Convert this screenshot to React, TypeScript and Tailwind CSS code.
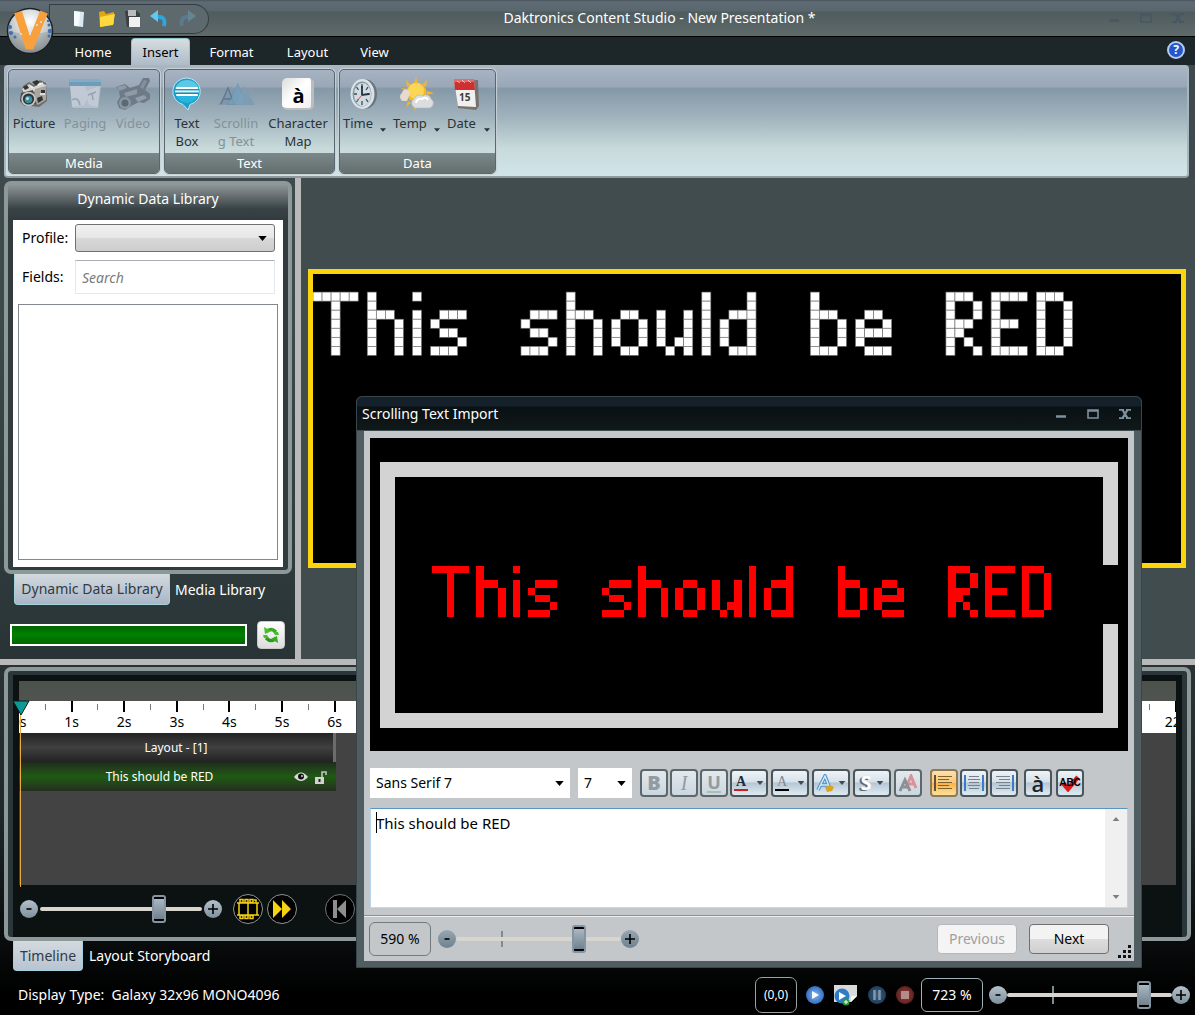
import React from 'react';

const GLYPHS: Record<string, string[]> = {
  T: ['XXXXX', '..X..', '..X..', '..X..', '..X..', '..X..', '..X..'],
  h: ['X...', 'X...', 'XXX.', 'X..X', 'X..X', 'X..X', 'X..X'],
  i: ['X', '.', 'X', 'X', 'X', 'X', 'X'],
  s: ['....', '....', '.XXX', 'X...', '.XX.', '...X', 'XXX.'],
  o: ['....', '....', '.XX.', 'X..X', 'X..X', 'X..X', '.XX.'],
  u: ['....', '....', 'X..X', 'X..X', 'X..X', 'X.XX', '.X.X'],
  l: ['X', 'X', 'X', 'X', 'X', 'X', 'X'],
  d: ['...X', '...X', '.XXX', 'X..X', 'X..X', 'X..X', '.XXX'],
  b: ['X...', 'X...', 'XXX.', 'X..X', 'X..X', 'X..X', 'XXX.'],
  e: ['....', '....', '.XX.', 'X..X', 'XXXX', 'X...', '.XXX'],
  R: ['XXX.', 'X..X', 'X..X', 'XXX.', 'XX..', 'X.X.', 'X..X'],
  E: ['XXXX', 'X...', 'X...', 'XXX.', 'X...', 'X...', 'XXXX'],
  D: ['XXX.', 'X..X', 'X..X', 'X..X', 'X..X', 'X..X', 'XXX.'],
  ' ': ['.....'],
};

/* 96x32 LED matrix that lights the cells of a message. */
function LedMatrix({ message, col, row, color, grid }: { message: string; col: number; row: number; color: string; grid?: string }) {
  const lamps: React.ReactElement[] = [];
  let x = col;
  for (const ch of message) {
    const rows = GLYPHS[ch];
    rows.forEach((line, r) =>
      [...line].forEach((c, k) => {
        if (c === 'X') {
          lamps.push(
            <rect key={`${x + k}-${r}`} x={x + k} y={row + r} width={1} height={1} fill={color} stroke={grid ?? 'none'} strokeWidth={0.07} />,
          );
        }
      }),
    );
    x += rows[0].length + (ch === ' ' ? 0 : 1);
  }
  return (
    <svg role="img" aria-label={message} viewBox="0 0 96 32" shapeRendering={grid ? 'auto' : 'crispEdges'} className="block w-full">
      {lamps}
    </svg>
  );
}

const SLIDER =
  "h-7 min-w-0 appearance-none bg-transparent [&::-webkit-slider-runnable-track]:h-1 [&::-webkit-slider-runnable-track]:rounded-full [&::-webkit-slider-runnable-track]:bg-[#d8d4ce] [&::-webkit-slider-thumb]:-mt-3 [&::-webkit-slider-thumb]:h-7 [&::-webkit-slider-thumb]:w-3.5 [&::-webkit-slider-thumb]:appearance-none [&::-webkit-slider-thumb]:rounded-[3px] [&::-webkit-slider-thumb]:border-2 [&::-webkit-slider-thumb]:border-[#8495a1] [&::-webkit-slider-thumb]:bg-[linear-gradient(180deg,#000_0_2px,#a9b8c2_2px,#71818e_22px,#000_22px)]";

function RoundStep({ label, dark }: { label: string; dark?: boolean }) {
  return (
    <button
      aria-label={label === '+' ? 'Zoom in' : 'Zoom out'}
      className={
        'flex size-[18px] shrink-0 items-center justify-center rounded-full text-black ' +
        (dark ? 'bg-linear-to-b from-[#97a6b2] to-[#6f818f]' : 'bg-linear-to-b from-[#b4c1ca] to-[#7e909d]')
      }
    >
      <svg viewBox="0 0 12 12" className="size-3" stroke="currentColor" strokeWidth="1.6">
        {label === '+' ? <path d="M1 6h10M6 1v10" /> : <path d="M3.5 6h5" />}
      </svg>
    </button>
  );
}

function Caret({ className }: { className?: string }) {
  return (
    <svg viewBox="0 0 10 6" className={className ?? 'h-[5px] w-[9px]'} fill="currentColor">
      <path d="M0 0h10L5 6z" />
    </svg>
  );
}

/* ---------- ribbon icons ---------- */

const CameraIcon = () => (
  <svg viewBox="0 0 32 32" className="size-8">
    <path d="M5 8l6-4 5 3 6-5 6 3 1 18-8 6-16-2-3-5 2-8z" fill="#6d6c68" />
    <path d="M4 11l7-5 5 3 5-5 7 3v4l-9 2-13 3z" fill="#d5d4cf" />
    <path d="M17 11l11-3v14l-8 5-4-5z" fill="#a7a6a1" />
    <path d="M3 15l12-3 3 14-11 2-5-5z" fill="#4b4b49" />
    <path d="M14 4l5-2 3 2-4 4z M23 12h4v3h-4z M5 9l4-2 2 3-4 2z M19 20l5-2 1 4-5 3z" fill="#33332f" />
    <path d="M20 7l5-2M12 8l3 2M22 16h5" stroke="#f1f0ec" strokeWidth="1.500" />
    <circle cx="10.500" cy="21" r="7.300" fill="#c5c6c3" />
    <circle cx="10.500" cy="21" r="5.600" fill="#2e3436" />
    <circle cx="10.500" cy="21.500" r="3.800" fill="#3e8a9a" />
    <circle cx="9.500" cy="20.500" r="1.500" fill="#b6e4ec" />
  </svg>
);
const PagingIcon = () => (
  <svg viewBox="0 0 34 32" className="h-8 w-[34px]">
    <path d="M4 8h29l-3 22H5z" fill="#b4bfcc" />
    <path d="M1 1h32v7H1z" fill="#6f9cb8" />
    <path d="M1 1h32v3H1z" fill="#84adc5" />
    <path d="M2 8h14l3 5 12-5-1 21-9-2-2-6-3 6-12 2z" fill="#c0c9d4" />
    <path d="M4 22q6-4 8 5M20 17l8-3M24 15l1 7" stroke="#93a3b3" strokeWidth="1.500" fill="none" />
  </svg>
);
const VideoIcon = () => (
  <svg viewBox="0 0 34 32" className="h-8 w-[34px]" fill="#6d7a87">
    <path d="M0 9l9-3 5 4 9-3 4-7h6l1 3-5 9 5 4v5l-6 4-5-1-6 3-8 5-6-2-2-6 3-5-1-6z" />
    <path d="M1 9l8-2 2 3-8 3z" fill="#8e9aa6" />
    <path d="M24 9l4-7 3 1-4 8z" fill="#84909b" />
    <circle cx="9" cy="25" r="6" fill="#8a96a1" />
    <circle cx="9" cy="25" r="3.500" fill="#5c6975" />
    <path d="M8 15l13-4v5l-11 3z" fill="#8e9aa6" />
    <path d="M19 20l9-3 3 3-9 4z" fill="#939eaa" />
  </svg>
);
const BubbleIcon = () => (
  <svg viewBox="0 0 32 34" className="h-[34px] w-8">
    <path d="M16 1a14 13.500 0 0 1 3 26.500L17 33l-5-5.500A14 13.500 0 0 1 16 1z" fill="#1b9cc9" stroke="#b7e8f5" />
    <path d="M16 3a12 11 0 0 1 12 11H4A12 11 0 0 1 16 3z" fill="#5cc8e6" />
    <path d="M5 16h22a11 10 0 0 1-22 0z" fill="#26b5dd" />
    <rect x="5" y="10" width="22" height="2" rx="1" fill="#fff" />
    <rect x="4" y="13.500" width="24" height="2" rx="1" fill="#d9f3fa" />
    <rect x="5" y="17" width="22" height="2" rx="1" fill="#fff" />
    <path d="M4 12.700h24M5 16.300h22" stroke="#1a6f8e" strokeWidth=".8" />
  </svg>
);
const ScrollIcon = () => (
  <svg viewBox="0 0 38 32" className="h-8 w-[38px]">
    <path d="M1 27L14 8l8 18z" fill="#8297ab" />
    <path d="M9 27L21 5l8 22z" fill="#7396b0" />
    <path d="M19 27L27 8l11 19z" fill="#7d9db5" />
    <path d="M4 26L11 10l6 16M7 21h8" stroke="#5f7a91" strokeWidth="1.500" fill="none" />
    <path d="M12 26L21 6l6 20z" fill="#7ba3bf" opacity=".7" />
  </svg>
);
const CharIcon = () => (
  <span className="flex size-8 items-end justify-center rounded-[5px] border-r-[3px] border-b-2 border-[#bcbcbc] bg-linear-to-br from-[#dcdcdc] via-white to-[#f0f0f0]">
    <span className="pl-1 font-['Open_Sans'] text-xl leading-6 font-bold text-black">à</span>
  </span>
);
const ClockIcon = () => (
  <svg viewBox="0 0 32 32" className="size-8">
    <ellipse cx="18" cy="16" rx="11" ry="14.500" fill="#68747e" />
    <ellipse cx="14.500" cy="16" rx="12" ry="15" fill="#dbe2e6" />
    <ellipse cx="14" cy="16" rx="9.500" ry="12.500" fill="#8398a6" />
    <ellipse cx="14.500" cy="16.500" rx="8.500" ry="11.500" fill="#d1dce2" />
    <path d="M14 6v4M14 23v4M6 16h3M19 16h3M8.500 9l2 3M20 9l-2 3M8.500 24l2-3M20 24l-2-3" stroke="#3b4954" strokeWidth="1.300" />
    <path d="M14 8v9l7-1" stroke="#27333c" strokeWidth="1.800" fill="none" />
    <path d="M14 17l-5 6" stroke="#c55" />
  </svg>
);
const WeatherIcon = () => (
  <svg viewBox="0 0 36 34" className="h-[34px] w-9">
    <path d="M18 0l2 6h-4zM8 3l5 5-4 2zM29 3l-5 5 4 2zM36 16l-7-2v4zM17 34l-2-7h4zM3 11l7 1-2 3zM8 30l2-6 3 2z" fill="#f4b52c" />
    <circle cx="18.500" cy="15.500" r="10" fill="#f6b920" />
    <circle cx="18" cy="14" r="8" fill="#fcd755" />
    <path d="M5 24a4.500 4.500 0 0 1-1-8 4 4 0 0 1 6-3q3 2 1 6l-2 5z" fill="#e8d9ce" />
    <path d="M17 31a5 5 0 0 1-1-9 6 6 0 0 1 9-3 5 5 0 0 1 8 3 5 5 0 0 1-1 9z" fill="#dcdddf" stroke="#b6babf" strokeWidth=".7" />
    <path d="M18 26q1-5 6-4 4-3 6 1" stroke="#fff" strokeWidth="2" fill="none" />
  </svg>
);
const CalendarIcon = () => (
  <svg viewBox="0 0 28 32" className="h-8 w-7">
    <path d="M6 3l20-1 1 26-3 4L6 30z" fill="#77716f" />
    <path d="M2 2h20l2 27-18-1z" fill="#f2f0ee" />
    <path d="M2 1h20l1 11H3z" fill="#cf2f31" />
    <path d="M2 1h20v3H2z" fill="#e66b68" />
    <path d="M5 3l3 2M10 2l3 3M16 2l3 3" stroke="#fff" opacity=".6" />
    <text x="7" y="23" fontSize="10" fontWeight="bold" fontFamily="Open Sans, sans-serif" fill="#3c3c3c">15</text>
  </svg>
);

function RibbonButton({ icon, label, width, disabled }: { icon: React.ReactNode; label: string; width: string; disabled?: boolean }) {
  return (
    <button disabled={disabled} className={'flex flex-col items-center pt-1 ' + width + (disabled ? ' text-[#84919b]' : ' text-[#2c3235]')}>
      <span className="flex h-10 items-center">{icon}</span>
      <span className="text-[13px] leading-[18px] whitespace-pre-line">{label}</span>
    </button>
  );
}
function RibbonMenuButton({ icon, label, width }: { icon: React.ReactNode; label: string; width: string }) {
  return (
    <button className={'flex flex-col pt-1 text-[#2c3235] ' + width}>
      <span className="flex h-10 items-center pl-2">{icon}</span>
      <span className="flex w-full items-end justify-between pr-1 pl-[3px] text-[13px] leading-[18px]">
        {label}
        <Caret className="h-1 w-1.5" />
      </span>
    </button>
  );
}
function RibbonGroup({ title, width, children }: { title: string; width: string; children: React.ReactNode }) {
  return (
    <section aria-label={title} className={'flex h-[105px] flex-col overflow-hidden rounded-[5px] border border-[#596870] shadow-[0_0_1px_1px_#c8d2d8] ' + width}>
      <div className="flex flex-1 items-start">{children}</div>
      <h2 className="h-5 bg-linear-to-b from-[#7b8789] to-[#64706f] text-center text-[13px] leading-5 text-white">{title}</h2>
    </section>
  );
}

/* ---------- dialog toolbar ---------- */

const TB = 'flex h-7 items-center justify-center rounded-[4px] border-2 ';
const TB_LIVE = 'border-[#49565b] bg-[linear-gradient(180deg,#eef3f7_0%,#d8e1e9_45%,#b5c6d4_50%,#dfebf3_100%)] ';
function Tool({ label, children, menu, active, off }: { label: string; children: React.ReactNode; menu?: boolean; active?: boolean; off?: boolean }) {
  return (
    <button
      aria-label={label}
      disabled={off}
      className={
        TB +
        (active ? 'border-[#8c7a58] bg-[linear-gradient(180deg,#fde0ae_0%,#fbc876_48%,#f9b24c_52%,#fde29a_100%)] ' : off ? 'border-[#5c676b] bg-linear-to-b from-[#e3e9ee] to-[#cbd6df] ' : TB_LIVE) +
        (menu ? 'w-[38px] gap-2' : 'w-7')
      }
    >
      {children}
      {menu && <Caret className="h-1 w-2 text-[#3d4b57]" />}
    </button>
  );
}
function AlignLines({ left, right, gold }: { left?: boolean; right?: boolean; gold?: boolean }) {
  return (
    <svg viewBox="0 0 20 18" className="h-[18px] w-5" shapeRendering="crispEdges">
      {left && <path d="M1 1v16" stroke={gold ? '#5d5236' : '#3c7cc4'} strokeWidth="2" />}
      {right && <path d="M19 1v16" stroke="#3c7cc4" strokeWidth="2" />}
      <path
        d={gold ? 'M4 2.500h14M4 5.500h11M4 8.500h14M4 11.500h11M4 14.500h14' : left ? 'M5 2.500h10M4 5.500h12M5 8.500h10M4 11.500h12M5 14.500h10' : 'M2 2.500h14M5 5.500h11M2 8.500h14M5 11.500h11M2 14.500h14'}
        stroke={gold ? '#7b6330' : '#77828c'}
        strokeWidth="1"
      />
    </svg>
  );
}

function WindowButtons({ className, gap }: { className: string; gap: string }) {
  return (
    <div className={'flex items-center ' + gap + ' ' + className}>
      <button aria-label="Minimize"><svg viewBox="0 0 12 10" className="h-2.5 w-3"><path d="M1 7.500h10" stroke="currentColor" strokeWidth="2.500" /></svg></button>
      <button aria-label="Maximize"><svg viewBox="0 0 12 10" className="h-2.5 w-3"><path d="M1 1h10v8H1zM1 2h10" stroke="currentColor" strokeWidth="1.600" fill="none" /></svg></button>
      <button aria-label="Close"><svg viewBox="0 0 12 10" className="h-2.5 w-3"><path d="M3 0l6 10M9 0L3 10M0 .7h5M7 .7h5M0 9.300h5M7 9.300h5" stroke="currentColor" strokeWidth="2.200" /></svg></button>
    </div>
  );
}

function ScrollingTextDialog() {
  return (
    <div role="dialog" aria-label="Scrolling Text Import" className="absolute top-[396px] right-[53px] left-[356px] flex flex-col rounded-t-[6px] border border-[#39464b] bg-[#515e61]">
      <header className="flex h-[34px] items-center justify-between rounded-t-[5px] border-b border-[#3c494d] bg-[linear-gradient(180deg,#14212b_0_9px,#0a1114_10px,#101819_100%)] pr-2.5 pl-[5px] text-white">
        <h2 className="text-sm">Scrolling Text Import</h2>
        <WindowButtons className="text-[#7c909e]" gap="gap-5" />
      </header>
      <div className="mx-[7px] mb-1.5 flex flex-col bg-[#c3c7c9]">
        <div className="mx-1.5 mt-[7px] bg-black px-2.5 pt-6 pb-[23px]">
          <div className="relative border-[15px] border-[#d3d3d3]">
            <LedMatrix message="This should be RED" col={5} row={12} color="#ff0000" />
            <span className="absolute top-[88px] -right-[15px] h-[59px] w-[15px] bg-black" />
          </div>
        </div>
        <div className="mt-[17px] flex h-[30px] items-center px-1.5">
          <div className="relative flex h-full w-[200px] items-center bg-white">
            <select aria-label="Font" className="size-full appearance-none bg-transparent px-1.5 text-sm text-black"><option>Sans Serif 7</option></select>
            <Caret className="pointer-events-none absolute right-1.5 h-[5px] w-[9px] text-black" />
          </div>
          <div className="relative ml-2 flex h-full w-[54px] items-center bg-white">
            <select aria-label="Font size" className="size-full appearance-none bg-transparent px-1.5 text-sm text-black"><option>7</option></select>
            <Caret className="pointer-events-none absolute right-1.5 h-[5px] w-[9px] text-black" />
          </div>
          <div className="ml-2 flex gap-0.5">
            <Tool label="Bold" off><span className="font-['Open_Sans'] text-xl leading-5 font-extrabold text-[#949b9f]">B</span></Tool>
            <Tool label="Italic" off><span className="font-['Liberation_Serif'] text-xl leading-5 text-[#949b9f] italic">I</span></Tool>
            <Tool label="Underline" off><span className="border-b-2 border-[#a9c0b4] font-['Open_Sans'] text-lg leading-[18px] font-bold text-[#949b9f]">U</span></Tool>
          </div>
          <div className="ml-0.5 flex gap-[3px]">
            <Tool label="Font color" menu><span className="border-b-2 border-[#c8201c] px-0.5 font-['Liberation_Serif'] text-sm leading-[14px] font-bold text-[#1c2b3e]">A</span></Tool>
            <Tool label="Outline color" menu><span className="border-b-2 border-black px-0.5 font-['Liberation_Serif'] text-sm leading-[14px] text-[#808a92]">A</span></Tool>
            <Tool label="Text effect" menu>
              <svg viewBox="0 0 18 18" className="-mr-1 size-[18px]">
                <path d="M2 16L9 2l5 13M5 11h7" stroke="#4a8fc9" strokeWidth="3.500" fill="none" />
                <path d="M2 16L9 2l5 13M5 11h7" stroke="#d6e9f6" strokeWidth="1.500" fill="none" />
                <path d="M9 13l5-2 4 2-2 4-5 1z" fill="#d9a520" />
              </svg>
            </Tool>
            <Tool label="Shadow" menu>
              <span className="-mr-1 font-['Open_Sans'] text-xl leading-5 font-bold text-white [text-shadow:-2px_1px_0_#5f6b74]">S</span>
            </Tool>
            <Tool label="Clear style" off>
              <svg viewBox="0 0 20 18" className="h-[18px] w-5">
                <path d="M8 14l5-12 5 12M10 10h6" stroke="#d9929a" strokeWidth="3" fill="none" />
                <path d="M2 17l5-11 5 11M4 13h7" stroke="#8c9094" strokeWidth="3" fill="none" />
              </svg>
            </Tool>
          </div>
          <div className="ml-2 flex gap-0.5">
            <Tool label="Align left" active><AlignLines left gold /></Tool>
            <Tool label="Align center"><AlignLines left right /></Tool>
            <Tool label="Align right"><AlignLines right /></Tool>
          </div>
          <div className="ml-1.5 flex gap-1">
            <Tool label="Insert character"><span className="font-['Open_Sans'] text-[22px] leading-5 font-semibold text-[#1d2225]">à</span></Tool>
            <Tool label="Spell check">
              <span className="relative flex items-center justify-center">
                <svg viewBox="0 0 22 18" className="h-[18px] w-[22px]"><path d="M4 9l5 6L19 3" stroke="#e01818" strokeWidth="4.500" fill="none" /></svg>
                <span className="absolute font-['Liberation_Sans'] text-[10px] font-bold text-black">ABC</span>
              </span>
            </Tool>
          </div>
        </div>
        <div className="relative mx-1.5 mt-2.5 flex h-[100px] border border-t-[#5794bf] border-r-[#b7d5ea] border-b-[#c5daf2] border-l-[#b7d5ea] bg-white">
          <textarea aria-label="Message text" defaultValue="This should be RED" className="min-w-0 flex-1 resize-none px-[5px] pt-1 text-[15px] leading-5 text-black outline-none" />
          <span className="absolute top-[3px] left-[5px] h-[21px] w-px bg-black" />
          <div className="flex w-[22px] flex-col items-center justify-between bg-[#f0f0f0] py-2 text-[#7b7f85]">
            <button aria-label="Scroll up"><Caret className="h-1 w-2 rotate-180" /></button>
            <button aria-label="Scroll down"><Caret className="h-1 w-2" /></button>
          </div>
        </div>
        <footer className="relative mt-[7px] flex h-[46px] items-center border-t border-[#8b8f90] px-[5px] shadow-[inset_0_1px_#eceeee]">
          <output className="flex h-[34px] w-[62px] items-center justify-center rounded-[6px] border border-[#707b80] text-sm text-black">590 %</output>
          <div className="ml-[7px] flex items-center">
            <RoundStep label="-" dark />
            <div className="relative flex items-center">
              <span className="absolute left-[45px] h-4 w-0.5 bg-[#7d8b94]" />
              <input type="range" aria-label="Preview zoom" defaultValue={77} className={SLIDER + ' relative w-[165px]'} />
            </div>
            <RoundStep label="+" dark />
          </div>
          <div className="ml-auto flex gap-3 pr-5">
            <button disabled className="h-[30px] w-20 rounded-[4px] border border-[#b5b9bb] bg-[#f4f4f4] text-sm text-[#a0a0a0]">Previous</button>
            <button className="h-[30px] w-20 rounded-[4px] border border-[#707070] bg-[linear-gradient(180deg,#f3f3f3_0_50%,#dddddd_50%,#cfcfcf_100%)] text-sm text-black">Next</button>
          </div>
          <svg viewBox="0 0 14 14" className="absolute right-[3px] bottom-0.5 size-3.5" fill="#111">
            <path d="M11 0h3v3h-3zM11 5h3v3h-3zM6 5h3v3H6zM11 10h3v3h-3zM6 10h3v3H6zM1 10h3v3H1z" />
          </svg>
        </footer>
      </div>
    </div>
  );
}

function Ball({ tint, children }: { tint: string; children: React.ReactNode }) {
  return <span className={'flex size-[18px] items-center justify-center rounded-full ' + tint}>{children}</span>;
}

export default function App() {
  return (
    <div className="relative flex min-h-screen flex-col overflow-hidden bg-[linear-gradient(180deg,#3f4a4e_0%,#3e494c_30%,#2c373a_60%,#20282b_80%,#000_98%)] font-['Noto_Sans',sans-serif] text-sm text-white">
      <header className="relative flex h-9 items-center justify-center bg-[linear-gradient(180deg,#49545c_0,#5f6b74_2px,#5a666d_11px,#505b5e_12px,#5f6a6b_100%)]">
        <div className="absolute top-1 left-[49px] flex h-[30px] w-40 items-center gap-2 rounded-r-full rounded-tl-[14px] border border-[#343e42] bg-[#5d696c] pl-5">
          <button aria-label="New"><svg viewBox="0 0 18 18" className="size-[18px]"><path d="M4 1l10 1-1 15-9-1z" fill="#dbe9f1" /><path d="M4 1l6 1-1 14-5-1z" fill="#f5fafc" /></svg></button>
          <button aria-label="Open" className="ml-0.5"><svg viewBox="0 0 18 18" className="size-[18px]"><path d="M1 2l5-1 2 3 8-2v12L2 17z" fill="#e0a70e" /><path d="M2 7l15-3-2 11-13 2z" fill="#ffd93d" /></svg></button>
          <button aria-label="Save"><svg viewBox="0 0 18 18" className="size-[18px]"><path d="M1 1h12l3 3v13H3z" fill="#3d3f41" /><path d="M4 0h8v6H4z" fill="#b9bcbe" /><path d="M5 7h11v10H5z" fill="#f0f0f0" /></svg></button>
          <button aria-label="Undo"><svg viewBox="0 0 18 18" className="size-[18px]"><path d="M4 7h6q6 1 4 9" stroke="#2aa7dd" strokeWidth="4" fill="none" /><path d="M0 6l8-6v12z" fill="#62c8ef" /></svg></button>
          <button aria-label="Redo" disabled className="ml-0.5"><svg viewBox="0 0 18 18" className="size-[18px]"><path d="M14 7H8Q2 8 4 16" stroke="#597b8b" strokeWidth="4" fill="none" /><path d="M18 6l-8-6v12z" fill="#668593" /></svg></button>
        </div>
        <h1 className="pl-[124px] text-sm">Daktronics Content Studio - New Presentation *</h1>
        <WindowButtons className="absolute right-[11px] text-[#465765]" gap="gap-5" />
      </header>

      <button aria-label="Application menu" className="absolute top-[7px] left-1.5 z-10">
        <svg viewBox="0 0 48 48" className="size-12">
          <defs><radialGradient id="orb" cx=".5" cy=".3" r=".8"><stop offset="0" stopColor="#fff" /><stop offset=".5" stopColor="#c9cccd" /><stop offset="1" stopColor="#646b6e" /></radialGradient></defs>
          <circle cx="24" cy="24" r="22.500" fill="url(#orb)" stroke="#1b2022" strokeWidth="1.500" />
          <path d="M3 24q21 6 42 0-2 20-21 21Q5 44 3 24z" fill="#8f9698" opacity=".45" />
          <path d="M12 5l11.500 36L38 5" stroke="#f8a03c" strokeWidth="8" fill="none" strokeLinejoin="bevel" />
          <g fill="#3c70b8"><circle cx="4" cy="20" r="2" /><circle cx="5" cy="26" r="2" /><circle cx="9" cy="30" r="1.500" /><circle cx="43" cy="18" r="1.500" /><circle cx="44" cy="24" r="2.200" /><circle cx="42" cy="14" r="1.200" /><circle cx="43" cy="29" r="1.500" /></g>
          <g fill="#dfe9f6"><circle cx="25" cy="21" r="1" /><circle cx="31" cy="18" r="1" /><circle cx="24" cy="27" r="1" /><circle cx="15" cy="27" r="1" /><circle cx="35" cy="15" r="1" /></g>
        </svg>
      </button>

      <nav className="flex h-[29px] items-end border-t border-black bg-[#1d2628] pl-[55px] text-[13px]">
        <button className="h-[26px] w-[76px]">Home</button>
        <button className="h-[27px] w-[59px] rounded-t-[4px] border border-b-0 border-[#8fc4cd] bg-linear-to-b from-[#d7dde1] to-[#aebbc8] text-black">Insert</button>
        <button className="h-[26px] w-[83px]">Format</button>
        <button className="h-[26px] w-[69px]">Layout</button>
        <button className="h-[26px] w-[65px]">View</button>
        <button aria-label="Help" className="mr-2.5 mb-1.5 ml-auto flex size-[18px] items-center justify-center rounded-full border-2 border-[#b4cbf0] bg-[#2358cc] text-xs font-bold">?</button>
      </nav>

      <div className="mr-1.5 ml-1 flex h-[113px] gap-1 rounded-[4px] border-2 border-[#a9b6be] border-b-[#8e9a9e] bg-[linear-gradient(180deg,#a9b5c4_0%,#99a7b7_18%,#8598a7_20%,#9fb2bc_45%,#c8dada_75%,#d1e5e8_100%)] px-0.5 pt-0.5">
        <RibbonGroup title="Media" width="w-[152px]">
          <RibbonButton icon={<CameraIcon />} label="Picture" width="w-[50px]" />
          <RibbonButton icon={<PagingIcon />} label="Paging" width="w-[52px]" disabled />
          <RibbonButton icon={<VideoIcon />} label="Video" width="w-11" disabled />
        </RibbonGroup>
        <RibbonGroup title="Text" width="w-[171px]">
          <RibbonButton icon={<BubbleIcon />} label={'Text\nBox'} width="w-11" />
          <RibbonButton icon={<ScrollIcon />} label={'Scrollin\ng Text'} width="w-[54px]" disabled />
          <RibbonButton icon={<CharIcon />} label={'Character\nMap'} width="w-[70px]" />
        </RibbonGroup>
        <RibbonGroup title="Data" width="w-[157px]">
          <RibbonMenuButton icon={<ClockIcon />} label="Time" width="w-[50px]" />
          <RibbonMenuButton icon={<WeatherIcon />} label="Temp" width="w-[54px]" />
          <RibbonMenuButton icon={<CalendarIcon />} label="Date" width="w-[50px]" />
        </RibbonGroup>
      </div>

      <main className="flex h-[481px]">
        <aside className="flex w-[295px] shrink-0 flex-col pt-[3px]">
          <section className="mr-[3px] ml-1 flex h-[393px] flex-col rounded-[7px] border-4 border-[#8d9899] bg-[#323c3f] px-[5px] pb-[3px]">
            <h2 className="-mx-[5px] h-[35px] bg-[linear-gradient(180deg,#8d9496_0,#384246_24px,#323c3f_100%)] text-center leading-7">Dynamic Data Library</h2>
            <div className="flex flex-1 flex-col bg-white px-[5px] pb-[7px] text-black">
              <div className="grid grid-cols-[49px_1fr] items-center gap-x-1 gap-y-2 pt-1 pr-[3px] pl-1">
                <label htmlFor="profile">Profile:</label>
                <span className="relative flex items-center">
                  <select id="profile" className="h-7 w-full appearance-none rounded-[3px] border border-[#707070] bg-[linear-gradient(180deg,#f2f2f2_0%,#e6e6e6_48%,#d8d8d8_52%,#cdcdcd_100%)]" />
                  <Caret className="pointer-events-none absolute right-2 h-[5px] w-[9px]" />
                </span>
                <label htmlFor="fields">Fields:</label>
                <input id="fields" placeholder="Search" className="h-[34px] w-full border border-[#e3e9ef] border-t-[#abadb3] px-1.5 placeholder:text-[#7b7b7b] placeholder:italic" />
              </div>
              <div className="mt-2.5 flex-1 border border-[#828790]" />
            </div>
          </section>
          <div className="flex pl-3.5">
            <button className="h-[31px] w-[156px] rounded-b-[4px] border border-t-0 border-[#a4d2dc] bg-linear-to-b from-[#d3dade] to-[#a9b6c6] text-[#2f3a45]">Dynamic Data Library</button>
            <button className="h-[31px] px-[5px]">Media Library</button>
          </div>
          <div className="mt-4 flex items-center gap-2.5 pl-2.5">
            <div role="progressbar" aria-label="Library refresh" aria-valuenow={100} className="h-[22px] w-[237px] border-2 border-white bg-linear-to-b from-[#006400] via-[#008200] to-[#006400]" />
            <button aria-label="Refresh" className="flex size-7 items-center justify-center rounded-[4px] border border-[#c9c9c9] bg-linear-to-b from-white to-[#dcdcdc]">
              <svg viewBox="0 0 18 18" className="size-[18px]">
                <path d="M4 6q5-5 10 0" stroke="#3aa822" strokeWidth="3.200" fill="none" />
                <path d="M14 12q-5 5-10 0" stroke="#2a9a1a" strokeWidth="3.200" fill="none" />
                <path d="M2 1l1 7 6-3z" fill="#47c02c" /><path d="M16 17l-1-7-6 3z" fill="#3aa822" />
                <path d="M11 6h5l1 3h-4zM7 12H2L1 9h4z" fill="#47c02c" />
              </svg>
            </button>
          </div>
        </aside>
        <div className="w-1.5 shrink-0 bg-[#b9b9b9]" />
        <div className="min-w-0 flex-1 bg-[#414c4f] pt-[91px] pr-[9px] pl-[7px]">
          <div className="border-[5px] border-[#fbd40b] bg-black">
            <LedMatrix message="This should be RED" col={0} row={2} color="#ffffff" grid="#6e6e6e" />
          </div>
        </div>
      </main>

      <div className="h-1.5 shrink-0 bg-[#b9b9b9]" />

      <section aria-label="Timeline" className="mt-0.5 mr-1 ml-1 flex h-[274px] flex-col rounded-[7px] border-4 border-[#8d9899] bg-[#2a3639] px-[5px] pt-1">
        <div className="flex flex-1 flex-col bg-[#0c1212] px-1.5 pt-1.5">
          <div className="relative flex h-[204px] flex-col bg-[#434343]">
            <div className="h-5 bg-linear-to-b from-[#4b514b] to-[#50544f]" />
            <div className="flex h-8 overflow-hidden bg-white text-black">
              {Array.from({ length: 22 }, (_, i) => (
                <div key={i} className="flex min-w-0 flex-1 justify-between">
                  <div className="flex w-0 flex-col items-center">
                    <span className="h-[11px] w-0.5 shrink-0 bg-black" />
                    <span className="text-sm leading-5 whitespace-nowrap">{i}s</span>
                  </div>
                  <span className="mt-[3px] h-1.5 w-px bg-[#777]" />
                  <span />
                </div>
              ))}
              <div className="flex w-0 flex-col items-center">
                <span className="h-[11px] w-0.5 shrink-0 bg-black" />
                <span className="text-sm leading-5">22s</span>
              </div>
            </div>
            <div className="flex h-[29px] w-[317px] items-center justify-center border-r-[3px] border-[#6c6c6c] bg-linear-to-b from-[#242424] via-[#404040] to-[#222] text-xs">Layout - [1]</div>
            <div className="relative flex h-[29px] w-[317px] items-center justify-center bg-linear-to-b from-[#1f2b1b] via-[#1f5a12] to-[#22301d] pr-9 text-xs">
              This should be RED
              <div className="absolute right-2 flex gap-1.5">
                <button aria-label="Visible"><svg viewBox="0 0 14 12" className="h-3 w-3.5"><path d="M0 6q7-9 14 0-7 8-14 0z" fill="#d8dcd8" /><circle cx="7" cy="5.500" r="3" fill="#111" /><circle cx="8" cy="5" r="1" fill="#ccc" /></svg></button>
                <button aria-label="Unlocked"><svg viewBox="0 0 14 14" className="size-3.5"><path d="M1 7h9v7H1z" fill="#d0d4d0" /><path d="M8 7V2h4v3" stroke="#c0c4c0" strokeWidth="1.600" fill="none" /><path d="M4.500 9h2v3h-2z" fill="#222" /></svg></button>
              </div>
            </div>
            <div className="absolute top-8 bottom-[-2px] left-px w-px bg-[#e8a93a]" />
            <svg viewBox="0 0 18 16" className="absolute top-[19px] -left-[7px] h-4 w-[18px]"><path d="M1 1h16L9 15z" fill="#0b9a94" stroke="#0a1a1a" /></svg>
          </div>
          <div className="flex h-12 items-center pl-px">
            <RoundStep label="-" />
            <input type="range" aria-label="Timeline zoom" defaultValue={76} className={SLIDER + ' ml-0.5 w-[162px]'} />
            <span className="ml-0.5 flex"><RoundStep label="+" /></span>
            <button aria-label="Film strip" className="ml-[11px] flex size-[30px] items-center justify-center rounded-full border border-[#8f9595] bg-black">
              <svg viewBox="0 0 24 22" className="h-[22px] w-6" stroke="#f2cf14" strokeWidth="1.500" fill="none"><path d="M1 5h22M1 17h22M3 5v12M12 5v12M21 5v12M4 1.500h3v3H4zM9 1.500h3v3H9zM14 1.500h3v3h-3zM18 2h2v3M4 17.500h3v3H4zM9 17.500h3v3H9zM14 17.500h3v3h-3z" /></svg>
            </button>
            <button aria-label="Fast forward" className="ml-1 flex size-[30px] items-center justify-center rounded-full border border-[#8f9595] bg-black">
              <svg viewBox="0 0 20 20" className="size-5" fill="#f5d312"><path d="M1 1l9 9-9 9zM10 1l9 9-9 9z" /></svg>
            </button>
            <button aria-label="Go to start" className="ml-7 flex size-[30px] items-center justify-center rounded-full border border-[#6f7575] bg-black">
              <svg viewBox="0 0 16 18" className="h-[18px] w-4" fill="#8b8f90"><path d="M1 0h4v18H1zM14 0v18L5 9z" /></svg>
            </button>
          </div>
        </div>
      </section>

      <div className="flex h-[30px] pl-[13px]">
        <button className="w-[70px] rounded-b-[4px] border border-t-0 border-[#a4d2dc] bg-linear-to-b from-[#d3dade] to-[#b9c4d2] text-[#2f3a45]">Timeline</button>
        <button className="px-1.5">Layout Storyboard</button>
      </div>

      <footer className="flex flex-1 items-center pt-1 pr-[5px] pl-[18px]">
        <p className="whitespace-pre">Display Type:  Galaxy 32x96 MONO4096</p>
        <div className="ml-auto flex items-center">
          <output className="flex h-9 w-[42px] items-center justify-center rounded-[7px] border border-[#9aa1a3] text-xs">(0,0)</output>
          <div className="ml-[9px] flex items-center gap-2.5">
            <button aria-label="Play"><Ball tint="bg-radial from-[#7fb8f2] to-[#1550a8]"><svg viewBox="0 0 8 8" className="size-2" fill="#fff"><path d="M1 0l7 4-7 4z" /></svg></Ball></button>
            <button aria-label="Play layout">
              <svg viewBox="0 0 24 22" className="h-[22px] w-6"><path d="M0 1h23v11l-6 6H0z" fill="#d7d9da" /><path d="M23 12l-6 6v-6z" fill="#f7f7f7" /><circle cx="8" cy="12" r="7.500" fill="#2e7cc8" /><path d="M5 8l7 4-7 4z" fill="#fff" /><circle cx="12" cy="18" r="3.500" fill="#2f9a34" /><path d="M10 18h4M12 16v4" stroke="#fff" /></svg>
            </button>
            <button aria-label="Pause"><Ball tint="bg-radial from-[#3c5f80] to-[#15314f]"><svg viewBox="0 0 8 8" className="size-2.5" fill="#8497a8"><path d="M1 0h2v8H1zM5 0h2v8H5z" /></svg></Ball></button>
            <button aria-label="Stop"><Ball tint="bg-radial from-[#934141] to-[#4c1515]"><span className="size-2 bg-[#b48a8a]" /></Ball></button>
          </div>
          <output className="ml-[7px] flex h-[34px] w-[62px] items-center justify-center rounded-[6px] border border-[#9fb0b8] text-sm">723 %</output>
          <div className="ml-1.5 flex items-center">
            <RoundStep label="-" />
            <div className="relative flex items-center">
              <span className="absolute left-[45px] h-[18px] w-0.5 bg-[#7d8b94]" />
              <input type="range" aria-label="Canvas zoom" defaultValue={86} className={SLIDER + ' relative w-[165px]'} />
            </div>
            <RoundStep label="+" />
          </div>
        </div>
      </footer>

      <ScrollingTextDialog />
    </div>
  );
}
